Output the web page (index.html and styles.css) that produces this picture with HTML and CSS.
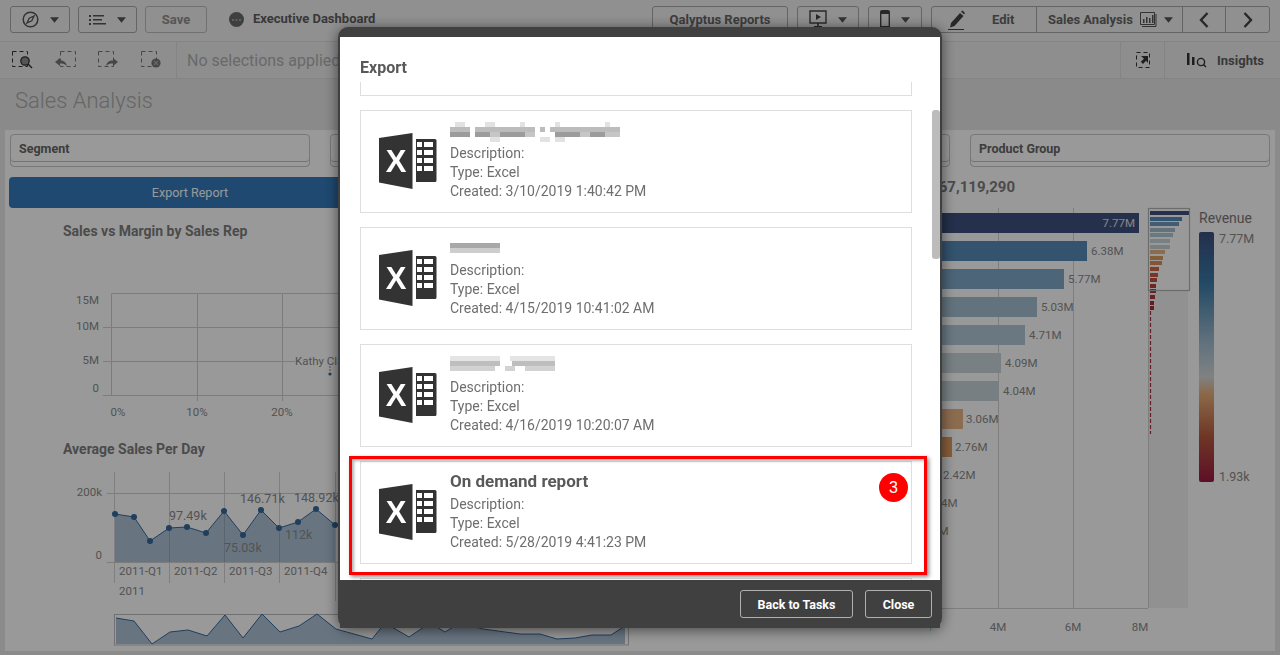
FILE: index.html
```html
<!DOCTYPE html>
<html lang="en">
<head>
<meta charset="UTF-8">
<meta name="viewport" content="width=device-width, initial-scale=1.0">
<title>Executive Dashboard</title>
<link rel="stylesheet" href="styles.css">
</head>
<body>

<svg class="defs" width="0" height="0">
  <symbol id="excel" viewBox="0 0 58 58">
    <path d="M0 5 L33.5 0 V56 L0 49.5 Z" fill="#333"/>
    <text x="17" y="39" text-anchor="middle" class="excel-x">X</text>
    <path d="M37 6 H56 a1.5 1.5 0 0 1 1.5 1.5 V47.5 a1.5 1.5 0 0 1 -1.5 1.5 H37 Z" fill="#333"/>
    <path d="M38 9h5v5h-5z M45 9h9v5h-9z M38 17h5v5h-5z M45 17h9v5h-9z M38 25h5v5h-5z M45 25h9v5h-9z M38 33h5v5h-5z M45 33h9v5h-9z" fill="#fff"/>
  </symbol>
  <symbol id="caret" viewBox="0 0 10 6">
    <path d="M0 0 H10 L5 6 Z" fill="#555"/>
  </symbol>
</svg>

<div class="toolbar">
  <div class="tool-group">
    <button class="tbtn nav-btn">
      <svg width="17" height="17" viewBox="0 0 17 17"><circle cx="8.5" cy="8.5" r="7.3" fill="none" stroke="#555" stroke-width="1.5"/><path d="M12 5 L9.8 9.8 L5 12 L7.2 7.2 Z" fill="none" stroke="#555" stroke-width="1.3"/></svg>
      <svg class="caret" width="9" height="6"><use href="#caret"/></svg>
    </button>
    <button class="tbtn list-btn">
      <svg width="17" height="12" viewBox="0 0 17 12"><path d="M0 1h2v2H0z M0 5h2v2H0z M0 9h2v2H0z M4 1h11v1.6H4z M4 5h9v1.6H4z M4 9h13v1.6H4z" fill="#555"/></svg>
      <svg class="caret" width="9" height="6"><use href="#caret"/></svg>
    </button>
    <button class="tbtn save-btn">Save</button>
    <svg class="dots" width="15" height="15" viewBox="0 0 15 15"><circle cx="7.5" cy="7.5" r="7.5" fill="#6a6a6a"/><circle cx="4" cy="8" r="1.1" fill="#aaa"/><circle cx="7.5" cy="8" r="1.1" fill="#aaa"/><circle cx="11" cy="8" r="1.1" fill="#aaa"/></svg>
    <span class="app-name">Executive Dashboard</span>
  </div>
  <div class="tool-group right-group">
    <button class="tbtn reports-btn">Qalyptus Reports</button>
    <button class="tbtn present-btn">
      <svg width="18" height="20" viewBox="0 0 18 20"><path d="M1 1h16v12H1z" fill="none" stroke="#444" stroke-width="1.4"/><path d="M7 4 L12 7 L7 10 Z" fill="#444"/><path d="M8.2 13h1.6v3h-1.6z M5 16h8v1.4H5z" fill="#444"/></svg>
      <svg class="caret" width="9" height="6"><use href="#caret"/></svg>
    </button>
    <button class="tbtn device-btn">
      <svg width="10" height="20" viewBox="0 0 10 20"><rect x="0.7" y="0.7" width="8.6" height="18" rx="1.4" fill="none" stroke="#444" stroke-width="1.4"/><path d="M1 1h8v3H1z M1 16h8v3H1z" fill="#444"/></svg>
      <svg class="caret" width="9" height="6"><use href="#caret"/></svg>
    </button>
    <div class="btn-group">
      <button class="gbtn edit-btn">
        <svg width="18" height="20" viewBox="0 0 18 20"><path d="M3 13 L12 3 L15.5 6 L6.5 16 L2 17.5 Z M13 1.5 L14.5 0.5 L17 3 L16 4.5 Z" fill="#444"/><path d="M0 19h16v1H0z" fill="#444"/></svg>
        <span>Edit</span>
      </button>
      <button class="gbtn sheet-btn">
        <span>Sales Analysis</span>
        <svg width="17" height="15" viewBox="0 0 17 15"><path d="M0.5 0.5h14v12h-14z M16 2v12.5H2" fill="none" stroke="#555"/><path d="M3 7h1.5v4H3z M6 5h1.5v6H6z M9 6h1.5v5H9z M12 3h1.5v8H12z" fill="#555"/></svg>
        <svg class="caret" width="9" height="6"><use href="#caret"/></svg>
      </button>
      <button class="gbtn arrow-btn">
        <svg width="10" height="16" viewBox="0 0 10 16"><path d="M8.5 1 L2 8 L8.5 15" fill="none" stroke="#444" stroke-width="2.4"/></svg>
      </button>
      <button class="gbtn arrow-btn next-btn">
        <svg width="10" height="16" viewBox="0 0 10 16"><path d="M1.5 1 L8 8 L1.5 15" fill="none" stroke="#444" stroke-width="2.4"/></svg>
      </button>
    </div>
  </div>
</div>

<div class="selbar">
  <div class="sel-tools">
    <svg class="sel-icon" width="22" height="18" viewBox="0 0 22 18"><rect x="0.5" y="0.5" width="15" height="15" fill="none" stroke="#333" stroke-dasharray="4 3"/><circle cx="13" cy="10" r="4.2" fill="#8e8e8e" stroke="#333" stroke-width="1.3"/><path d="M16 13 L20 17" stroke="#333" stroke-width="1.5"/></svg>
    <svg class="sel-icon faded" width="22" height="18" viewBox="0 0 22 18"><rect x="5.5" y="0.5" width="15" height="15" fill="none" stroke="#777" stroke-dasharray="4 3"/><path d="M0 11 L5 7 V9.5 C9 9.5 11 11 12 15 C10 13 8 12.5 5 12.5 V15 Z" fill="#777"/></svg>
    <svg class="sel-icon faded" width="22" height="18" viewBox="0 0 22 18"><rect x="0.5" y="0.5" width="15" height="15" fill="none" stroke="#777" stroke-dasharray="4 3"/><path d="M20 11 L15 7 V9.5 C11 9.5 9 11 8 15 C10 13 12 12.5 15 12.5 V15 Z" fill="#777"/></svg>
    <svg class="sel-icon faded" width="22" height="18" viewBox="0 0 22 18"><rect x="0.5" y="0.5" width="15" height="15" fill="none" stroke="#777" stroke-dasharray="4 3"/><circle cx="15" cy="12" r="4.6" fill="#777"/><path d="M13 10 L17 14 M17 10 L13 14" stroke="#aaa" stroke-width="1.2"/></svg>
  </div>
  <span class="sel-text">No selections applied</span>
  <div class="sel-right">
    <div class="sel-cell pick-cell">
      <svg width="14" height="16" viewBox="0 0 14 16"><rect x="0.5" y="0.5" width="13" height="15" fill="none" stroke="#333" stroke-dasharray="4 3"/><path d="M5 4 H12 V11 L10 8.8 L7 12 L4.8 9.8 L8 6.8 Z" fill="#333"/></svg>
    </div>
    <div class="sel-cell insights-cell">
      <svg width="21" height="16" viewBox="0 0 21 16"><path d="M0 1h2.5v12H0z M5 5h2.5v8H5z" fill="#333"/><circle cx="14" cy="10" r="3.6" fill="none" stroke="#333" stroke-width="1.4"/><path d="M16.4 12.6 L19 15" stroke="#333" stroke-width="1.4"/></svg>
      <span>Insights</span>
    </div>
  </div>
</div>

<div class="sheet-title">Sales Analysis</div>

<div class="sheet">
  <div class="filters">
    <div class="filter-pane"><span>Segment</span></div>
    <div class="filter-pane"><span>Region</span></div>
    <div class="filter-pane"><span>Sales Rep</span></div>
    <div class="filter-pane"><span>Product Group</span></div>
  </div>
  <div class="sheet-body">
    <div class="left-col">
      <button class="export-btn">Export Report</button>
      <div class="chart-title first-title">Sales vs Margin by Sales Rep</div>
      <svg class="scatter" width="330" height="190" viewBox="10 240 330 190">
        <path d="M111.5 292.5 H340 M111.5 292.5 V394.5 M197.5 292.5 V400 M282.5 292.5 V400 M103 326.5 H340 M103 360.5 H295 M103 394.5 H340" fill="none" stroke="#cfcfcf" stroke-width="1"/>
        <g class="axis-text" text-anchor="end">
          <text x="99" y="303">15M</text>
          <text x="99" y="329">10M</text>
          <text x="99" y="363">5M</text>
          <text x="99" y="391">0</text>
        </g>
        <g class="axis-text" text-anchor="middle">
          <text x="118" y="415">0%</text>
          <text x="197" y="415">10%</text>
          <text x="282" y="415">20%</text>
        </g>
        <text class="axis-text" x="295" y="364">Kathy Clark</text>
        <path d="M330 365 V371" stroke="#8a8a8a" stroke-dasharray="2 1"/>
        <circle cx="330" cy="373" r="1.6" fill="#34699b"/>
      </svg>
      <div class="chart-title">Average Sales Per Day</div>
      <svg class="trend" width="630" height="192" viewBox="10 458 630 192">
        <path d="M114.5 471 V582 M169.5 471 V582 M224.5 471 V582 M279.5 471 V582 M335.5 471 V600" fill="none" stroke="#d4d4d4"/>
        <path d="M107 492.5 H340 M107 561.5 H340" fill="none" stroke="#cfcfcf"/>
        <path d="M115 513 L134 516 L150 540 L169 527 L187 526 L206 532 L224 510 L243 534 L261 509 L279 527 L298 521 L316 508 L335 524 V561 H115 Z" class="area"/>
        <path d="M115 513 L134 516 L150 540 L169 527 L187 526 L206 532 L224 510 L243 534 L261 509 L279 527 L298 521 L316 508 L335 524" class="line"/>
        <g class="dot">
          <circle cx="115" cy="513" r="3"/><circle cx="134" cy="516" r="3"/><circle cx="150" cy="540" r="3"/>
          <circle cx="169" cy="527" r="3"/><circle cx="187" cy="526" r="3"/><circle cx="206" cy="532" r="3"/>
          <circle cx="224" cy="510" r="3"/><circle cx="243" cy="534" r="3"/><circle cx="261" cy="509" r="3"/>
          <circle cx="279" cy="527" r="3"/><circle cx="298" cy="521" r="3"/><circle cx="316" cy="508" r="3"/>
          <circle cx="335" cy="524" r="3"/>
        </g>
        <g class="axis-text">
          <text x="102" y="495" text-anchor="end">200k</text>
          <text x="102" y="558" text-anchor="end">0</text>
          <text x="119" y="574">2011-Q1</text>
          <text x="174" y="574">2011-Q2</text>
          <text x="229" y="574">2011-Q3</text>
          <text x="284" y="574">2011-Q4</text>
          <text x="119" y="594">2011</text>
        </g>
        <g class="value-text">
          <text x="169" y="519">97.49k</text>
          <text x="240" y="502">146.71k</text>
          <text x="294" y="501">148.92k</text>
          <text x="224" y="551">75.03k</text>
          <text x="285" y="538">112k</text>
        </g>
        <rect class="mini-frame" x="114.5" y="613.5" width="514" height="30.5"/>
        <path class="area" d="M116 617 L134 620 L152 643 L170 631 L188 629 L207 635 L225 614 L243 637 L262 613 L280 631 L299 625 L317 613 L336 628 L372 638 L385 622 L409 636 L430 622 L445 631 L460 622 L483 628 L520 633 L540 633 L557 638 L575 637 L592 634 L611 634 L625 625 V643 H116 Z"/>
        <path class="line" d="M116 617 L134 620 L152 643 L170 631 L188 629 L207 635 L225 614 L243 637 L262 613 L280 631 L299 625 L317 613 L336 628 L372 638 L385 622 L409 636 L430 622 L445 631 L460 622 L483 628 L520 633 L540 633 L557 638 L575 637 L592 634 L611 634 L625 625"/>
      </svg>
    </div>
    <div class="right-col">
      <svg class="bars" width="345" height="483" viewBox="930 167 345 483">
        <text class="total" x="1015" y="192" text-anchor="end">$67,119,290</text>
        <rect class="mini-track" x="1149" y="291" width="39" height="317"/>
        <path d="M923.5 208 V608 M998.5 208 V608 M1073.5 208 V608 M1148.5 208 V608 M848 608.5 H1148" fill="none" stroke="#d2d2d2"/>
        <rect x="848" y="213" width="291" height="20" fill="#3c507f"/>
        <rect x="848" y="241" width="239" height="20" fill="#558ab8"/>
        <rect x="848" y="269" width="216" height="20" fill="#80a8c8"/>
        <rect x="848" y="297" width="189" height="20" fill="#a5c0d2"/>
        <rect x="848" y="325" width="177" height="20" fill="#afc8d8"/>
        <rect x="848" y="353" width="153" height="20" fill="#c8d6dc"/>
        <rect x="848" y="381" width="151" height="20" fill="#c6d4da"/>
        <rect x="848" y="409" width="115" height="20" fill="#eab484"/>
        <rect x="848" y="437" width="104" height="20" fill="#e09c60"/>
        <g class="axis-text">
          <text class="bar-inner" x="1135" y="227" text-anchor="end">7.77M</text>
          <text x="1091" y="255">6.38M</text>
          <text x="1068" y="283">5.77M</text>
          <text x="1041" y="311">5.03M</text>
          <text x="1029" y="339">4.71M</text>
          <text x="1005" y="367">4.09M</text>
          <text x="1003" y="395">4.04M</text>
          <text x="966" y="423">3.06M</text>
          <text x="955" y="451">2.76M</text>
          <text x="943" y="479">2.42M</text>
          <text x="925" y="507">1.94M</text>
          <text x="916" y="535">1.71M</text>
          <text x="923" y="631" text-anchor="middle">2M</text>
          <text x="998" y="631" text-anchor="middle">4M</text>
          <text x="1073" y="631" text-anchor="middle">6M</text>
          <text x="1140" y="631" text-anchor="middle">8M</text>
        </g>
        <rect x="1150" y="211" width="39" height="4" fill="#3c507f"/>
        <rect x="1150" y="217" width="32" height="4" fill="#558ab8"/>
        <rect x="1150" y="222" width="29" height="4" fill="#6f9cc0"/>
        <rect x="1150" y="228" width="25" height="4" fill="#a5c0d2"/>
        <rect x="1150" y="233" width="23" height="4" fill="#afc8d8"/>
        <rect x="1150" y="239" width="20" height="4" fill="#c8d6dc"/>
        <rect x="1150" y="245" width="20" height="4" fill="#c6d4da"/>
        <rect x="1150" y="250" width="15" height="4" fill="#eab484"/>
        <rect x="1150" y="256" width="13" height="4" fill="#e09c60"/>
        <rect x="1150" y="261" width="12" height="4" fill="#e09058"/>
        <rect x="1150" y="267" width="9" height="4" fill="#d06a48"/>
        <rect x="1150" y="273" width="8" height="4" fill="#c85a40"/>
        <rect x="1150" y="278" width="7" height="4" fill="#c05040"/>
        <rect x="1150" y="284" width="6" height="4" fill="#b84038"/>
        <rect x="1150" y="289" width="6" height="4" fill="#b03838"/>
        <rect x="1150" y="295" width="5" height="4" fill="#b03838"/>
        <rect x="1150" y="301" width="4" height="4" fill="#a83038"/>
        <rect x="1150" y="306" width="4" height="4" fill="#a83038"/>
        <path d="M1150.5 311 V434" stroke="#a83048" stroke-dasharray="4 2" stroke-width="1.2"/>
        <rect class="mini-window" x="1148.5" y="208.5" width="41" height="82"/>
        <text class="legend-title" x="1199" y="223">Revenue</text>
        <rect x="1199" y="232" width="15" height="250" rx="2" fill="url(#revenue)"/>
        <text class="axis-text legend-value" x="1219" y="243">7.77M</text>
        <text class="axis-text legend-value" x="1219" y="481">1.93k</text>
        <defs>
          <linearGradient id="revenue" x1="0" y1="0" x2="0" y2="1">
            <stop offset="0" stop-color="#3c507f"/>
            <stop offset="0.2" stop-color="#3a7aa8"/>
            <stop offset="0.45" stop-color="#a5c0d2"/>
            <stop offset="0.58" stop-color="#d5d8d8"/>
            <stop offset="0.65" stop-color="#e8ae78"/>
            <stop offset="0.82" stop-color="#b85a40"/>
            <stop offset="1" stop-color="#9c1a40"/>
          </linearGradient>
        </defs>
      </svg>
    </div>
  </div>
</div>

<div class="overlay"></div>

<div class="modal">
  <div class="modal-head">Export</div>
  <div class="modal-list">
    <div class="report-card cut-card"></div>
    <div class="report-card">
      <svg class="excel-icon" width="58" height="58"><use href="#excel"/></svg>
      <div class="report-info">
        <svg class="smudge" width="172" height="20" viewBox="0 0 172 20">
          <path fill="#e2e2e2" d="M5 0h10v5H5z M35 0h10v5H35z M70 0h5v5h-5z M105 0h5v5h-5z M155 0h5v5h-5z M90 15h10v5H90z M105 15h10v5h-10z M40 15h10v5H40z"/>
          <path fill="#bcbcbc" d="M0 5h20v5H0z M25 5h60v5H25z M90 5h5v5h-5z M100 5h70v5h-70z"/>
          <path fill="#9c9c9c" d="M0 10h20v5H0z M25 10h15v5H25z M50 10h25v5H50z M105 10h25v5h-25z M140 10h15v5h-15z"/>
          <path fill="#c6c6c6" d="M40 10h10v5H40z M75 10h10v5H75z M130 10h10v5h-10z M155 10h15v5h-15z"/>
        </svg>
        <div>Description:</div>
        <div>Type: Excel</div>
        <div>Created: 3/10/2019 1:40:42 PM</div>
      </div>
    </div>
    <div class="report-card">
      <svg class="excel-icon" width="58" height="58"><use href="#excel"/></svg>
      <div class="report-info">
        <svg class="smudge" width="172" height="20" viewBox="0 0 172 20">
          <path fill="#a8a8a8" d="M0 4h50v5H0z"/>
          <path fill="#cdcdcd" d="M0 9h50v5H0z"/>
        </svg>
        <div>Description:</div>
        <div>Type: Excel</div>
        <div>Created: 4/15/2019 10:41:02 AM</div>
      </div>
    </div>
    <div class="report-card">
      <svg class="excel-icon" width="58" height="58"><use href="#excel"/></svg>
      <div class="report-info">
        <svg class="smudge" width="172" height="20" viewBox="0 0 172 20">
          <path fill="#e4e4e4" d="M0 0h50v5H0z M60 0h45v5H60z"/>
          <path fill="#bebebe" d="M0 5h50v5H0z M62 5h43v5H62z"/>
          <path fill="#d2d2d2" d="M0 10h45v5H0z M55 10h10v5H55z M75 10h30v5H75z"/>
        </svg>
        <div>Description:</div>
        <div>Type: Excel</div>
        <div>Created: 4/16/2019 10:20:07 AM</div>
      </div>
    </div>
    <div class="report-card">
      <svg class="excel-icon" width="58" height="58"><use href="#excel"/></svg>
      <div class="report-info">
        <div class="report-name">On demand report</div>
        <div>Description:</div>
        <div>Type: Excel</div>
        <div>Created: 5/28/2019 4:41:23 PM</div>
      </div>
    </div>
    <div class="report-card"></div>
  </div>
  <div class="scroll-thumb"></div>
  <div class="modal-foot">
    <button class="foot-btn back-btn">Back to Tasks</button>
    <button class="foot-btn close-btn">Close</button>
  </div>
</div>

<div class="callout"></div>
<div class="callout-badge">3</div>

</body>
</html>
```

FILE: styles.css
```css
* {
  box-sizing: border-box;
}

html, body {
  height: 655px;
}

body {
  margin: 0;
  overflow: hidden;
  background-color: #e8e8e8;
  font-family: Roboto, "Liberation Sans", sans-serif;
  color: #666;
}

button {
  font-family: inherit;
  cursor: pointer;
}

.defs {
  position: absolute;
}

/* top toolbar */
.toolbar {
  height: 42px;
  padding: 6px 10px 0;
  display: flex;
  justify-content: space-between;
  background-color: #f0f0f0;
  border-bottom: 1px solid #dcdcdc;
}

.tool-group {
  display: flex;
  align-items: flex-start;
  gap: 8px;
}

.right-group {
  gap: 9px;
}

.tbtn {
  height: 27px;
  display: flex;
  align-items: center;
  justify-content: center;
  gap: 11px;
  padding: 0;
  background-color: #f0f0f0;
  border: 1px solid #a8a8a8;
  border-radius: 3px;
  font-size: 13px;
  font-weight: 700;
  color: #666;
}

.nav-btn {
  width: 60px;
}

.list-btn {
  width: 59px;
}

.save-btn {
  width: 62px;
  color: #8f8f8f;
  border-color: #bdbdbd;
}

.dots {
  margin: 6px 0 0 14px;
}

.app-name {
  margin: 5px 0 0 1px;
  font-size: 13px;
  font-weight: 700;
  color: #5e5e5e;
  white-space: nowrap;
}

.reports-btn {
  width: 136px;
}

.present-btn {
  width: 62px;
}

.device-btn {
  width: 54px;
}

.btn-group {
  display: flex;
  height: 27px;
  margin-left: 0;
  border: 1px solid #a8a8a8;
  border-radius: 3px;
}

.gbtn {
  height: 100%;
  display: flex;
  align-items: center;
  padding: 0;
  background: none;
  border: none;
  border-right: 1px solid #a8a8a8;
  font-size: 13px;
  font-weight: 700;
  color: #666;
}

.edit-btn {
  width: 105px;
  padding-left: 16px;
  gap: 26px;
}

.sheet-btn {
  width: 146px;
  padding-left: 11px;
  gap: 7px;
}

.arrow-btn {
  width: 43px;
  justify-content: center;
}

.next-btn {
  border-right: none;
}

/* selections bar */
.selbar {
  height: 37px;
  display: flex;
  align-items: center;
  background-color: #ededed;
  border-bottom: 1px solid #dcdcdc;
}

.sel-tools {
  width: 177px;
  height: 100%;
  padding-left: 12px;
  display: flex;
  align-items: center;
  gap: 21px;
  border-right: 1px solid #dcdcdc;
}

.sel-text {
  margin-left: 10px;
  font-size: 16px;
  color: #b0b0b0;
}

.sel-right {
  margin-left: auto;
  height: 100%;
  display: flex;
}

.sel-cell {
  height: 100%;
  display: flex;
  align-items: center;
  border-left: 1px solid #dcdcdc;
}

.pick-cell {
  width: 44px;
  justify-content: center;
}

.insights-cell {
  width: 116px;
  padding-left: 22px;
  gap: 9px;
  font-size: 13px;
  font-weight: 700;
  color: #5e5e5e;
}

.sheet-title {
  height: 51px;
  padding: 9px 0 0 15px;
  font-size: 22px;
  font-weight: 300;
  color: #aaa;
  background-color: #e6e6e6;
}

/* sheet */
.sheet {
  height: 521px;
  margin: 0 5px;
  padding: 4px 5px 0;
  background-color: #fff;
}

.filters {
  display: flex;
  gap: 20px;
}

.filter-pane {
  width: 300px;
  height: 33px;
  padding: 6px 8px 0;
  border: 1px solid #c8c8c8;
  border-radius: 4px;
  box-shadow: inset 0 -4px 0 #fff, inset 0 -5px 0 #c0c0c0;
  font-size: 12.5px;
  font-weight: 700;
  color: #666;
}

.sheet-body {
  display: flex;
  justify-content: space-between;
}

.left-col {
  width: 362px;
}

.right-col {
  width: 345px;
  margin-right: -5px;
}

.export-btn {
  display: block;
  width: 362px;
  height: 31px;
  margin: 10px 0 0 -1px;
  background-color: #347abc;
  border: none;
  border-radius: 4px;
  font-size: 12.5px;
  color: #fff;
}

.chart-title {
  height: 20px;
  padding-left: 53px;
  margin-top: 8px;
  font-size: 14px;
  line-height: 20px;
  font-weight: 700;
  color: #7e7e7e;
}

.first-title {
  margin-top: 13px;
}

.scatter, .trend, .bars {
  display: block;
}

.axis-text text, text.axis-text {
  font-size: 11.5px;
  fill: #8a8a8a;
}

.value-text text {
  font-size: 12.5px;
  fill: #8a8a8a;
}

.area {
  fill: #34699b;
  fill-opacity: 0.4;
}

.line {
  fill: none;
  stroke: #34699b;
  stroke-width: 1;
}

.dot circle {
  fill: #34699b;
}

.mini-frame {
  fill: none;
  stroke: #bdbdbd;
}

.total {
  font-size: 15px;
  font-weight: 700;
  fill: #7e7e7e;
}

.mini-track {
  fill: #f2f2f2;
}

.mini-window {
  fill: none;
  stroke: #b4b4b4;
  stroke-width: 1.2;
}

text.bar-inner {
  fill: #e0e0e0;
}

.legend-title {
  font-size: 14px;
  fill: #7a7a7a;
}

text.legend-value {
  font-size: 12.5px;
}

/* dim layer and dialog */
.overlay {
  position: fixed;
  inset: 0;
  background-color: rgba(0, 0, 0, 0.4);
}

.modal {
  position: fixed;
  left: 338px;
  top: 27px;
  width: 604px;
  height: 601px;
  display: flex;
  flex-direction: column;
  background-color: #fff;
  border: 2px solid #404040;
  border-top-width: 10px;
  border-bottom-width: 0;
  border-radius: 10px;
  box-shadow: 0 2px 14px rgba(0, 0, 0, 0.55);
}

.modal-head {
  height: 45px;
  padding: 22px 0 0 20px;
  font-size: 16px;
  line-height: 18px;
  font-weight: 700;
  color: #595959;
}

.modal-list {
  height: 498px;
  padding: 0 28px 0 20px;
  overflow: hidden;
  display: flex;
  flex-direction: column;
  gap: 14px;
}

.report-card {
  flex: none;
  height: 103px;
  display: flex;
  border: 1px solid #dedede;
}

.cut-card {
  margin-top: -89px;
}

.excel-icon {
  margin: 22px 0 0 18px;
}

.report-info {
  margin-left: 13px;
  padding-top: 9px;
  font-size: 14px;
  line-height: 19px;
  color: #6e6e6e;
}

.report-name {
  height: 24px;
  font-size: 17px;
  line-height: 21px;
  font-weight: 700;
  color: #595959;
}

.smudge {
  display: block;
  height: 24px;
}

.excel-x {
  font-family: "Liberation Sans", sans-serif;
  font-size: 31px;
  font-weight: 700;
  fill: #fff;
}

.scroll-thumb {
  position: absolute;
  right: 0;
  top: 73px;
  width: 8px;
  height: 149px;
  background-color: #bcbcbc;
  border-radius: 3px;
}

.modal-foot {
  height: 48px;
  padding-right: 8px;
  display: flex;
  justify-content: flex-end;
  align-items: center;
  gap: 12px;
  background-color: #404040;
}

.foot-btn {
  height: 28px;
  padding: 0;
  background: none;
  border: 1px solid #b0b0b0;
  border-radius: 3px;
  font-size: 12.5px;
  font-weight: 700;
  color: #fff;
}

.back-btn {
  width: 113px;
}

.close-btn {
  width: 67px;
}

/* red annotation drawn on the screenshot */
.callout {
  position: fixed;
  left: 349px;
  top: 456px;
  width: 578px;
  height: 119px;
  border: 3px solid #f00;
  box-shadow: 2px 2px 4px rgba(0, 0, 0, 0.45), inset 2px 2px 3px rgba(0, 0, 0, 0.3);
}

.callout-badge {
  position: fixed;
  left: 879px;
  top: 473px;
  width: 29px;
  height: 29px;
  border-radius: 50%;
  background-color: #f00;
  color: #fff;
  font-family: "Liberation Sans", sans-serif;
  font-size: 16px;
  line-height: 29px;
  text-align: center;
}
```
